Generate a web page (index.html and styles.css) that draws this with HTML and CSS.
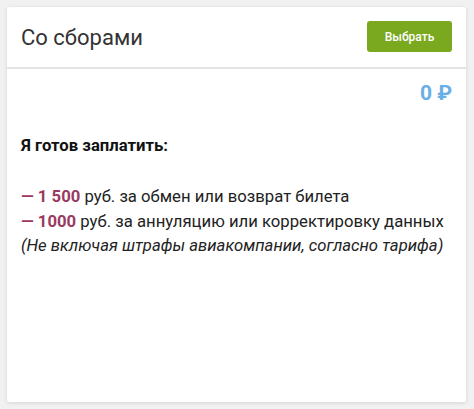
FILE: index.html
```html
<!DOCTYPE html>
<html lang="ru">
<head>
<meta charset="utf-8">
<link rel="stylesheet" href="styles.css">
</head>
<body>
<div class="card">
  <div class="card-head">
    <div class="title">Со сборами</div>
    <button class="btn">Выбрать</button>
  </div>
  <div class="card-body">
    <div class="price">0 ₽</div>
    <div class="lead">Я готов заплатить:</div>
    <div class="list">
      <div><span class="amt">— 1 500</span> руб. за обмен или возврат билета</div>
      <div><span class="amt">— 1000</span> руб. за аннуляцию или корректировку данных</div>
      <div class="note">(Не включая штрафы авиакомпании, согласно тарифа)</div>
    </div>
  </div>
</div>
</body>
</html>
```
FILE: styles.css
```css
html, body { margin: 0; padding: 0; }
body {
  background: #f1f1f1;
  font-family: Roboto, "Liberation Sans", sans-serif;
  width: 474px;
  height: 409px;
  padding: 7px 8px 7px 7px;
  box-sizing: border-box;
}
.card {
  background: #fff;
  height: 395px;
  box-shadow: 0 1px 4px rgba(0,0,0,0.12);
  border-radius: 2px;
  display: flex;
  flex-direction: column;
}
.card-head {
  height: 60px;
  border-bottom: 2px solid #e4e4e4;
  display: flex;
  align-items: center;
  justify-content: space-between;
  padding: 0 14px;
}
.title {
  font-size: 22px;
  color: #333;
  margin-top: 1px;
}
.btn {
  background: #7aa81f;
  color: #fff;
  border: none;
  border-radius: 3px;
  width: 85px;
  height: 31px;
  font-family: Roboto, "Liberation Sans", sans-serif;
  font-size: 12px;
  font-weight: 500;
  padding: 0;
  margin-top: -1px;
}
.card-body {
  padding: 12px 14px 0;
}
.price {
  text-align: right;
  font-size: 21px;
  font-weight: 700;
  color: #6aaee8;
  line-height: 24px;
}
.lead {
  font-size: 16.7px;
  font-weight: 700;
  color: #111;
  margin-top: 29px;
  line-height: 24px;
}
.list {
  margin-top: 27px;
  font-size: 16.7px;
  color: #222;
  line-height: 24.5px;
}
.amt {
  color: #9b3a61;
  font-weight: 700;
}
.note {
  font-style: italic;
}
```
